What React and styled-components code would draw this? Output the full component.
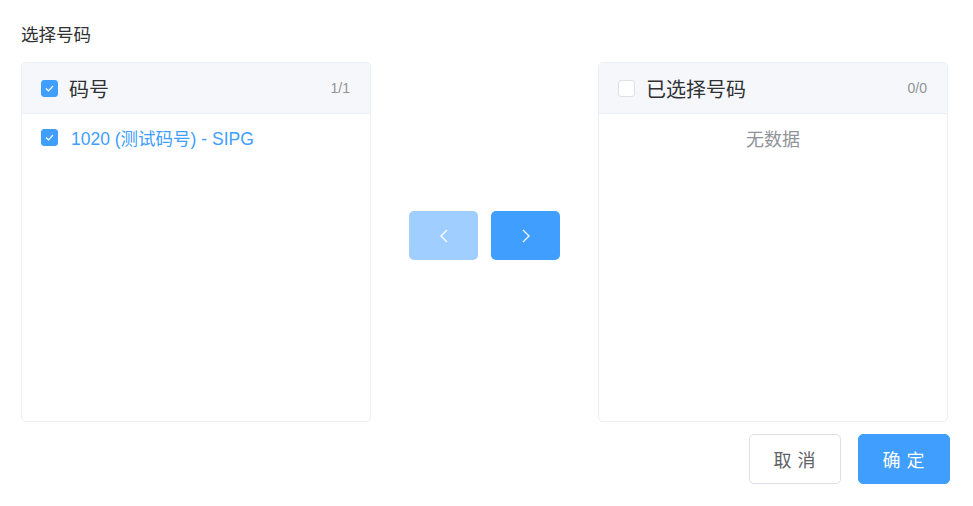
import React from "react";
import styled, { createGlobalStyle } from "styled-components";

const GlobalStyle = createGlobalStyle`
  body {
    margin: 0;
    background: #fff;
    font-family: "Liberation Sans", "Noto Sans CJK SC", sans-serif;
  }
`;

const Page = styled.div`
  width: 929px;
  padding: 23px 0 0 21px;
`;

const Title = styled.div`
  font-size: 17.5px;
  line-height: 24px;
  color: #303133;
  margin-bottom: 15px;
`;

const Transfer = styled.div`
  display: flex;
  width: 927px;
`;

const Panel = styled.div`
  width: 350px;
  height: 360px;
  box-sizing: border-box;
  border: 1px solid #ebeef5;
  border-radius: 5px;
  overflow: hidden;
  background: #fff;
`;

const PanelHeader = styled.div`
  height: 50px;
  display: flex;
  align-items: center;
  padding: 0 20px 0 19px;
  background: #f5f7fa;
  border-bottom: 1px solid #ebeef5;
`;

const HeaderLabel = styled.span`
  flex: 1;
  margin-left: 11px;
  font-size: 20px;
  color: #303133;
`;

const Count = styled.span`
  font-size: 14px;
  color: #909399;
`;

const PanelBody = styled.div`
  padding-top: 6px;
`;

const Item = styled.div`
  display: flex;
  align-items: center;
  height: 34px;
  padding-left: 19px;
  font-size: 17.5px;
  color: ${(p) => (p.checked ? "#409eff" : "#606266")};
`;

const ItemText = styled.span`
  margin-left: 13px;
`;

const Empty = styled.div`
  margin-top: 3px;
  line-height: 34px;
  text-align: center;
  font-size: 18px;
  color: #909399;
`;

const Box = styled.span`
  width: 17px;
  height: 17px;
  box-sizing: border-box;
  border-radius: 3px;
  display: inline-flex;
  align-items: center;
  justify-content: center;
  flex-shrink: 0;
  background: ${(p) => (p.checked ? "#409eff" : "#fff")};
  border: 1px solid ${(p) => (p.checked ? "#409eff" : "#dcdfe6")};
`;

const Middle = styled.div`
  flex: 1;
  display: flex;
  justify-content: center;
  align-items: flex-start;
  gap: 13px;
  padding-top: 149px;
`;

const ArrowButton = styled.button`
  width: 69px;
  height: 49px;
  border: none;
  border-radius: 5px;
  display: flex;
  align-items: center;
  justify-content: center;
  padding: 0;
  background: ${(p) => (p.disabled ? "#a0cfff" : "#409eff")};
  cursor: ${(p) => (p.disabled ? "not-allowed" : "pointer")};
`;

const Footer = styled.div`
  display: flex;
  justify-content: flex-end;
  gap: 17px;
  margin-top: 12px;
`;

const FooterButton = styled.button`
  width: 92px;
  height: 50px;
  box-sizing: border-box;
  border-radius: 5px;
  font-family: "Noto Sans CJK SC", sans-serif;
  font-size: 18px;
  letter-spacing: 1px;
  cursor: pointer;
  border: 1px solid ${(p) => (p.primary ? "#409eff" : "#dcdfe6")};
  background: ${(p) => (p.primary ? "#409eff" : "#fff")};
  color: ${(p) => (p.primary ? "#fff" : "#606266")};
`;

const Check = ({ checked }) => (
  <Box checked={checked}>
    {checked && (
      <svg width="9" height="7" viewBox="0 0 9 7">
        <polyline points="1,3.5 3.5,6 8,1" fill="none" stroke="#fff" strokeWidth="1.2" />
      </svg>
    )}
  </Box>
);

const Chevron = ({ dir }) => (
  <svg width="8" height="14" viewBox="0 0 8 14">
    <polyline
      points={dir === "left" ? "7,1 1,7 7,13" : "1,1 7,7 1,13"}
      fill="none"
      stroke="#fff"
      strokeWidth="1.3"
    />
  </svg>
);

export default function App() {
  return (
    <>
      <GlobalStyle />
      <Page>
        <Title>选择号码</Title>
        <Transfer>
          <Panel>
            <PanelHeader>
              <Check checked />
              <HeaderLabel>码号</HeaderLabel>
              <Count>1/1</Count>
            </PanelHeader>
            <PanelBody>
              <Item checked>
                <Check checked />
                <ItemText>1020 (测试码号) - SIPG</ItemText>
              </Item>
            </PanelBody>
          </Panel>
          <Middle>
            <ArrowButton disabled>
              <Chevron dir="left" />
            </ArrowButton>
            <ArrowButton>
              <Chevron dir="right" />
            </ArrowButton>
          </Middle>
          <Panel>
            <PanelHeader>
              <Check />
              <HeaderLabel>已选择号码</HeaderLabel>
              <Count>0/0</Count>
            </PanelHeader>
            <PanelBody>
              <Empty>无数据</Empty>
            </PanelBody>
          </Panel>
        </Transfer>
        <Footer>
          <FooterButton>取 消</FooterButton>
          <FooterButton primary>确 定</FooterButton>
        </Footer>
      </Page>
    </>
  );
}
